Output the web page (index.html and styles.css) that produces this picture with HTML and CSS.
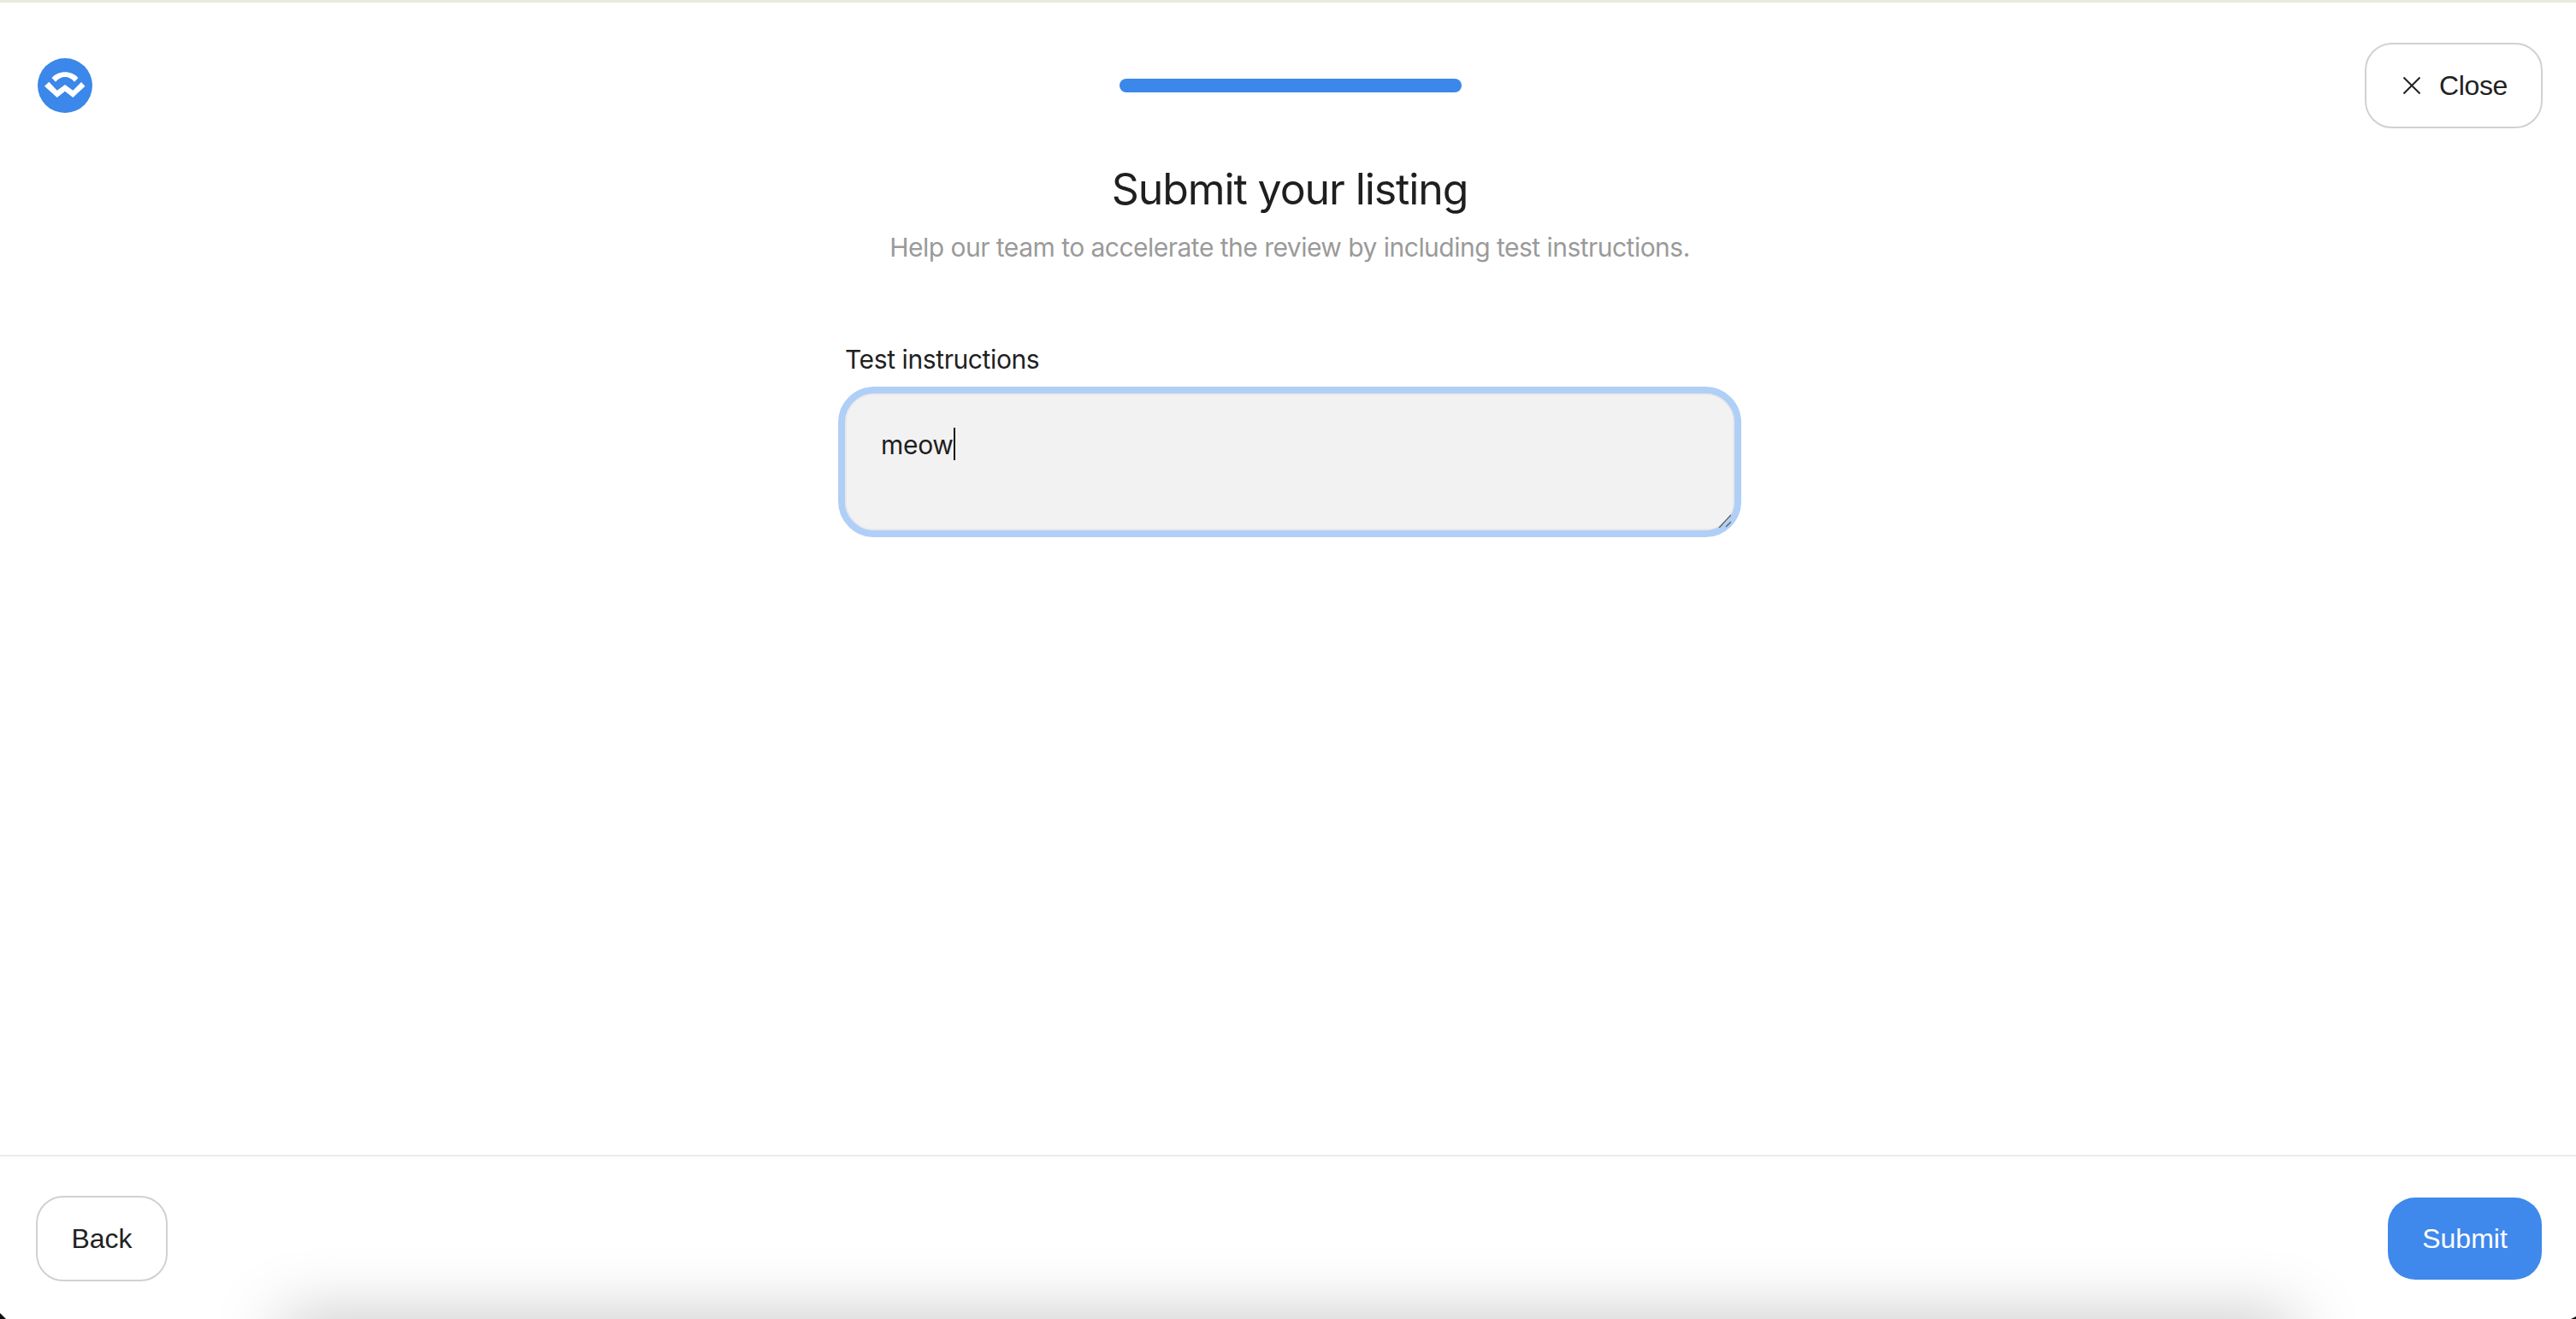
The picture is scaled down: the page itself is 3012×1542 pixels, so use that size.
FILE: index.html
```html
<!DOCTYPE html>
<html lang="en">

<head>
    <meta charset="utf-8">
    <title>Submit your listing</title>
    <link rel="stylesheet" href="styles.css">
</head>

<body>
    <div class="modal">
        <header class="topbar">
            <svg class="logo" viewBox="0 0 64 64">
                <circle cx="32" cy="32" r="32" fill="#3b87ea" />
                <path d="M16.500 23C24 14 40 14 47.500 23L43 27.700C37 20.200 27 20.200 21 27.700Z" fill="#fff" />
                <path d="M8 32.700L13.300 27.700L22.700 37.700L32 31L41.300 37.700L51 28L55.500 32.700L41.300 46L32 38.700L22.700 46Z" fill="#fff" />
            </svg>

            <div class="progress"></div>

            <button class="btn btn-close">
                <svg class="close-icon" viewBox="0 0 20 20">
                    <path d="M0.500 0.500L19.500 19.500M19.500 0.500L0.500 19.500" stroke="#222" stroke-width="2" fill="none" />
                </svg>
                Close
            </button>
        </header>

        <main class="content">
            <h1>Submit your listing</h1>
            <p class="subtitle">Help our team to accelerate the review by including test instructions.</p>

            <div class="field">
                <label>Test instructions</label>
                <div class="textarea">
                    <span class="typed">meow</span><span class="caret"></span>
                    <svg class="grip" viewBox="0 0 16 16">
                        <path d="M2 16L16 1M10 15L16 9" stroke="#666" stroke-width="1.500" fill="none" />
                    </svg>
                </div>
            </div>
        </main>

        <footer class="footer">
            <button class="btn btn-back">Back</button>
            <button class="btn btn-submit">Submit</button>
        </footer>

        <div class="bottom-shadow"></div>
        <div class="corner corner-left"></div>
        <div class="corner corner-right"></div>
    </div>
</body>

</html>
```

FILE: styles.css
```css
* {
    box-sizing: border-box;
}

html, body {
    margin: 0;
    height: 100%;
}

body {
    background-color: #fff;
    color: #1f1f1f;
    font-family: "Inter", "Liberation Sans", sans-serif;
    overflow: hidden;
}

.modal {
    position: relative;
    display: flex;
    flex-direction: column;
    height: 100%;
    border-top: 3px solid #e9e9dd;
    overflow: hidden;
}

.topbar {
    display: grid;
    grid-template-columns: 1fr auto 1fr;
    align-items: center;
    height: 100px;
    margin-top: 47px;
    padding: 0 39px 0 44px;
    flex-shrink: 0;
}

.logo {
    width: 64px;
    height: 64px;
}

.progress {
    width: 400px;
    height: 16px;
    border-radius: 8px;
    background-color: #3b87ea;
}

.btn {
    display: flex;
    align-items: center;
    justify-content: center;
    height: 100px;
    border: 2px solid #d1d1d1;
    border-radius: 32px;
    background-color: #fff;
    color: #222;
    font-family: "Liberation Sans", sans-serif;
    font-size: 32px;
}

.btn-close {
    justify-self: end;
    width: 208px;
    padding: 0 0 0 4px;
    gap: 22px;
    letter-spacing: -0.4px;
}

.close-icon {
    width: 20px;
    height: 20px;
}

.content {
    flex: 1;
    display: flex;
    flex-direction: column;
    align-items: center;
    padding-left: 4px;
    margin-top: 41px;
}

h1 {
    margin: 0;
    font-size: 50px;
    line-height: 60px;
    font-weight: 400;
    letter-spacing: -1.1px;
}

.subtitle {
    margin: 18px 0 0;
    font-size: 30px;
    line-height: 40px;
    color: #9a9a9a;
    letter-spacing: -0.52px;
}

.field {
    display: flex;
    flex-direction: column;
    width: 1040px;
    margin-top: 91px;
}

label {
    font-size: 30px;
    line-height: 40px;
    letter-spacing: -0.4px;
}

.textarea {
    position: relative;
    display: flex;
    align-items: flex-start;
    height: 160px;
    margin-top: 20px;
    padding: 38px 40px;
    border: 2px solid #e9e9e9;
    border-radius: 34px;
    background-color: #f2f2f2;
    background-clip: padding-box;
    outline: 8px solid #afcff7;
    outline-offset: 0;
    font-size: 30px;
    line-height: 40px;
    letter-spacing: -0.3px;
}

.caret {
    width: 2px;
    height: 38px;
    background-color: #111;
}

.grip {
    position: absolute;
    right: 2px;
    bottom: 1px;
    width: 16px;
    height: 16px;
}

.footer {
    display: flex;
    justify-content: space-between;
    align-items: center;
    height: 192px;
    padding: 2px 40px 0 42px;
    border-top: 2px solid #ebebeb;
    flex-shrink: 0;
}

.btn-back {
    width: 154px;
}

.btn-submit {
    width: 180px;
    height: 96px;
    border: none;
    background-color: #3f88ec;
    color: #fff;
}

/* shadow of the window underneath, bleeding in at the bottom */
.bottom-shadow {
    position: absolute;
    left: 330px;
    right: 330px;
    bottom: -60px;
    height: 60px;
    box-shadow: 0 0 80px rgba(0, 0, 0, 0.26);
}

.corner {
    position: absolute;
    bottom: 0;
    background-color: #111;
}

.corner-left {
    left: 0;
    width: 7px;
    height: 7px;
    clip-path: polygon(0 0, 100% 100%, 0 100%);
}

.corner-right {
    right: 0;
    width: 6px;
    height: 3px;
    clip-path: polygon(100% 0, 100% 100%, 0 100%);
}
```
